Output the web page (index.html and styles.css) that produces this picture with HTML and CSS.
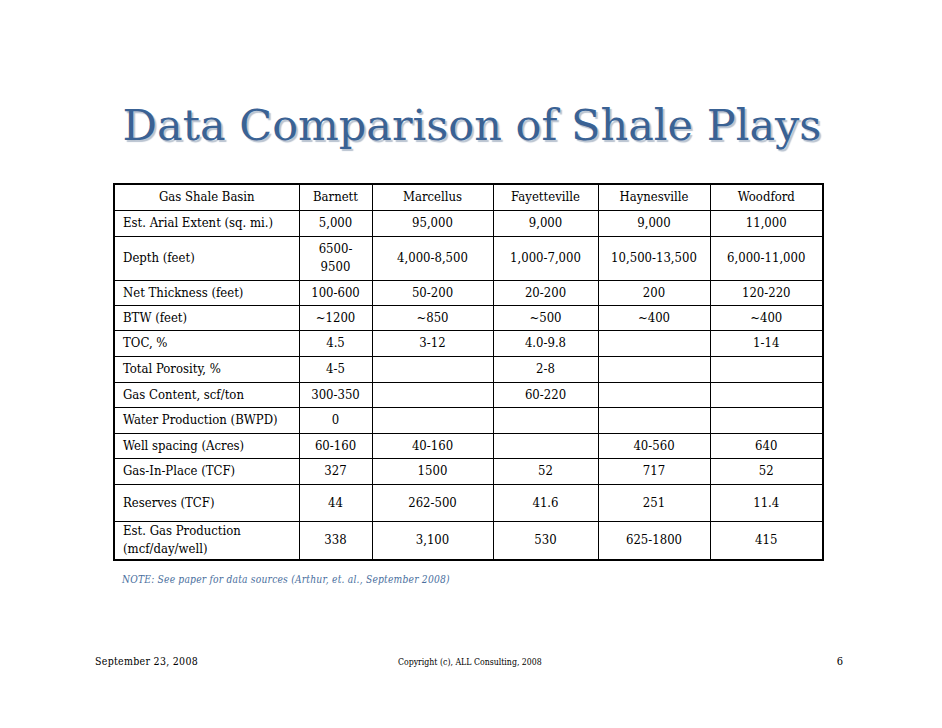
FILE: index.html
```html
<!DOCTYPE html>
<html>
<head>
<meta charset="utf-8">
<link rel="stylesheet" href="styles.css">
</head>
<body>
<div class="slide">
  <h1 class="title">Data Comparison of Shale Plays</h1>
  <table class="data">
    <colgroup>
      <col class="c0"><col class="c1"><col class="c2"><col class="c3"><col class="c4"><col class="c5">
    </colgroup>
    <tr class="h26"><th>Gas Shale Basin</th><th>Barnett</th><th>Marcellus</th><th>Fayetteville</th><th>Haynesville</th><th>Woodford</th></tr>
    <tr class="h26"><td class="lbl">Est. Arial Extent (sq. mi.)</td><td>5,000</td><td>95,000</td><td>9,000</td><td>9,000</td><td>11,000</td></tr>
    <tr class="h44"><td class="lbl">Depth (feet)</td><td>6500-<br>9500</td><td>4,000-8,500</td><td>1,000-7,000</td><td>10,500-13,500</td><td>6,000-11,000</td></tr>
    <tr class="h25"><td class="lbl">Net Thickness (feet)</td><td>100-600</td><td>50-200</td><td>20-200</td><td>200</td><td>120-220</td></tr>
    <tr class="h25"><td class="lbl">BTW (feet)</td><td>~1200</td><td>~850</td><td>~500</td><td>~400</td><td>~400</td></tr>
    <tr class="h26"><td class="lbl">TOC, %</td><td>4.5</td><td>3-12</td><td>4.0-9.8</td><td></td><td>1-14</td></tr>
    <tr class="h26"><td class="lbl">Total Porosity, %</td><td>4-5</td><td></td><td>2-8</td><td></td><td></td></tr>
    <tr class="h25"><td class="lbl">Gas Content, scf/ton</td><td>300-350</td><td></td><td>60-220</td><td></td><td></td></tr>
    <tr class="h26"><td class="lbl">Water Production (BWPD)</td><td>0</td><td></td><td></td><td></td><td></td></tr>
    <tr class="h25"><td class="lbl">Well spacing (Acres)</td><td>60-160</td><td>40-160</td><td></td><td>40-560</td><td>640</td></tr>
    <tr class="h26"><td class="lbl">Gas-In-Place (TCF)</td><td>327</td><td>1500</td><td>52</td><td>717</td><td>52</td></tr>
    <tr class="h37"><td class="lbl">Reserves (TCF)</td><td>44</td><td>262-500</td><td>41.6</td><td>251</td><td>11.4</td></tr>
    <tr class="h39"><td class="lbl">Est. Gas Production<br>(mcf/day/well)</td><td>338</td><td>3,100</td><td>530</td><td>625-1800</td><td>415</td></tr>
  </table>
  <p class="note">NOTE: See paper for data sources (Arthur, et. al., September 2008)</p>
  <div class="footer">
    <span class="date">September 23, 2008</span>
    <span class="copy">Copyright (c), ALL Consulting, 2008</span>
    <span class="page">6</span>
  </div>
</div>
</body>
</html>
```

FILE: styles.css
```css
html, body {
  margin: 0;
  padding: 0;
  background: #ffffff;
}
.slide {
  width: 942px;
  height: 728px;
  display: flex;
  flex-direction: column;
  font-family: "DejaVu Serif Condensed", "DejaVu Serif", serif;
  color: #000;
}
.title {
  margin: 95px 0 0 0;
  text-align: center;
  font-family: "DejaVu Serif", serif;
  font-weight: normal;
  font-size: 43px;
  line-height: 60px;
  color: #3a6294;
  text-shadow: 2px 2px 1px #b9c3d0;
  letter-spacing: 0;
  padding-left: 2px;
}
.data {
  margin: 28px 0 0 113px;
  width: 709px;
  border-collapse: collapse;
  border: 2px solid #000;
  font-size: 13px;
  table-layout: fixed;
}
.c0 { width: 185px; }
.c1 { width: 73px; }
.c2 { width: 121px; }
.c3 { width: 105px; }
.c4 { width: 112px; }
.c5 { width: 113px; }
.data th, .data td {
  border: 1px solid #000;
  padding: 0 4px;
  text-align: center;
  font-weight: normal;
  line-height: 18px;
  color: #000;
}
.data td.lbl {
  text-align: left;
  padding-left: 8px;
  white-space: nowrap;
}
.h25 { height: 25px; }
.h26 { height: 26px; }
.h37 { height: 37px; }
.h39 { height: 39px; }
.h44 { height: 44px; }
.note {
  margin: 13px 0 0 122px;
  font-style: italic;
  font-size: 10.2px;
  color: #4a6f9e;
  letter-spacing: 0.2px;
}
.footer {
  margin-top: 70px;
  display: flex;
  align-items: baseline;
  padding: 0 99px 0 95px;
}
.date {
  font-size: 10.5px;
  letter-spacing: 0.3px;
  width: 303px;
}
.copy {
  font-size: 8.7px;
  flex: 1;
  text-align: left;
}
.page {
  font-size: 11px;
}
```
